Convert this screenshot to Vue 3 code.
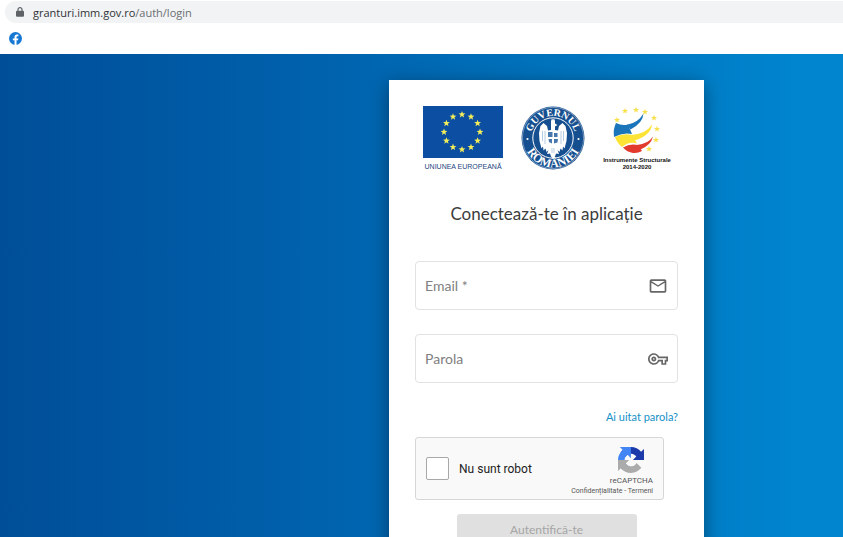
<template>
  <div class="ecran">
    <header class="browser">
      <div class="adresa">
        <svg class="lacat" viewBox="0 0 8 10" aria-hidden="true">
          <path d="M2 4V2.7a2 2 0 0 1 4 0V4" fill="none" stroke="#5f6368" stroke-width="1.2" />
          <rect x="0" y="3.8" width="8" height="6" rx="1" fill="#5f6368" />
        </svg>
        <span class="url">granturi.imm.gov.ro<span class="cale">/auth/login</span></span>
      </div>
      <nav class="marcaje">
        <a href="#" aria-label="Facebook">
          <svg class="facebook" viewBox="0 0 24 24">
            <circle cx="12" cy="12" r="12" fill="#1778d4" />
            <path
              d="M13.9 23.8v-8.4h2.8l.55-3.5H13.9V9.7c0-1 .5-1.9 2-1.9h1.5v-3s-1.4-.2-2.7-.2c-2.8 0-4.5 1.6-4.5 4.6v2.7H7.1v3.5h3.1v8.4z"
              fill="#fff"
            />
          </svg>
        </a>
      </nav>
    </header>

    <main class="pagina">
      <form class="card" @submit.prevent>
        <div class="sigle">
          <div class="sigla-ue">
            <svg viewBox="0 0 80 52" aria-hidden="true">
              <rect width="80" height="52" fill="#0b4ea2" />
              <polygon v-for="(p, i) in steleUE" :key="i" :points="p" fill="#f4ee5a" />
            </svg>
            <span>UNIUNEA EUROPEANĂ</span>
          </div>

          <svg class="sigla-guvern" viewBox="0 0 64 64" aria-hidden="true">
            <defs>
              <path id="arc-sus" d="M9.8 32a22.2 22.2 0 0 1 44.4 0" />
              <path id="arc-jos" d="M2.8 32a29.2 29.2 0 0 0 58.4 0" />
            </defs>
            <circle cx="32" cy="32" r="31.5" fill="#164f8f" />
            <circle cx="32" cy="32" r="30.6" fill="none" stroke="#fff" stroke-width="0.4" />
            <circle cx="32" cy="32" r="20.2" fill="#164f8f" stroke="#fff" stroke-width="1" />
            <text class="inel" text-anchor="middle">
              <textPath href="#arc-sus" startOffset="50%">GUVERNUL</textPath>
            </text>
            <text class="inel inel-jos" text-anchor="middle">
              <textPath href="#arc-jos" startOffset="50%">ROMÂNIEI</textPath>
            </text>
            <circle cx="6.5" cy="33" r="1.1" fill="#fff" />
            <circle cx="57.5" cy="33" r="1.1" fill="#fff" />
            <!-- acvila -->
            <path
              d="M30 15l1-2.500 1 1.500 1-1.500 1 2.500v2.500l2.500 1.500-2.500 1.500v3.500l3 .5 1-4.500 3.500-3 3 3 1.500 7-.5 8-2 7.500-1.500-2-.5 4-2-2-1 3.500-2-2 1.500 4-3-.5-1 3-2 2.500-2-2.500-1-3-3 .5 1.500-4-2 2-1-3.500-2 2-.5-4-1.500 2-2-7.500-.5-8 1.500-7 3-3 3.500 3 1 4.500 3-.5v-5z"
              fill="#fff"
            />
            <path
              d="M27 26h4.500v5H27zM33 27h3.500v4H33zM27.500 33h3.500v4.500l-3-1.500zM33 33h4l-.5 3.500-3.500 1z"
              fill="#4777ad"
            />
            <path
              d="M21.500 25v10M24 25v13M40 25v13M42.500 25v10M31 42v5M33 42v5"
              stroke="#86a8cf"
              stroke-width="0.6"
            />
          </svg>

          <div class="sigla-is">
            <svg viewBox="0 0 54 51" aria-hidden="true">
              <path d="M6 17Q12 20 18 18.500L22 28Q13 26 4 31Q3 23 6 17z" fill="#1b75bb" />
              <path d="M17 18.700Q28 17 33.500 7.500Q33 17 20.500 23.500z" fill="#1b75bb" />
              <path d="M5 31Q13 27 22 29L27 37.500Q19 35 12 41Q7 37 5 31z" fill="#fde335" />
              <path d="M21 29Q36 28 42 18.500Q41 29 25 34.500z" fill="#fde335" />
              <path d="M13 41.500Q20 37 28 39L32 45Q28 47.500 23 47Q17 46 13 41.500z" fill="#e23b2e" />
              <path d="M27 39Q38 38 43 30.500Q41 39 30.500 43.500z" fill="#e23b2e" />
              <polygon v-for="(p, i) in steleIS" :key="i" :points="p" fill="#f8e04a" />
            </svg>
            <span>Instrumente Structurale<br />2014-2020</span>
          </div>
        </div>

        <h1 class="titlu">Conectează-te în aplicație</h1>

        <div class="camp">
          <label for="email">Email *</label>
          <input id="email" v-model="email" type="email" autocomplete="username" />
          <svg class="icon" viewBox="0 0 24 24" aria-hidden="true">
            <path
              d="M22 6c0-1.100-.9-2-2-2H4c-1.100 0-2 .9-2 2v12c0 1.100.9 2 2 2h16c1.100 0 2-.9 2-2V6zm-2 0l-8 5-8-5h16zm0 12H4V8l8 5 8-5v10z"
            />
          </svg>
        </div>

        <div class="camp">
          <label for="parola">Parola</label>
          <input id="parola" v-model="parola" type="password" autocomplete="current-password" />
          <svg class="icon" viewBox="0 0 24 24" aria-hidden="true">
            <path
              d="M22 19h-6v-4h-2.680c-1.140 2.420-3.600 4-6.320 4-3.860 0-7-3.140-7-7s3.140-7 7-7c2.720 0 5.170 1.580 6.320 4H24v6h-2v4zm-4-2h2v-4h2v-2H11.940l-.23-.67C11.010 8.340 9.110 7 7 7c-2.760 0-5 2.240-5 5s2.240 5 5 5c2.110 0 4.010-1.340 4.710-3.330l.23-.67H18v4zM7 15c-1.650 0-3-1.350-3-3s1.350-3 3-3 3 1.350 3 3-1.350 3-3 3zm0-4c-.55 0-1 .45-1 1s.45 1 1 1 1-.45 1-1-.45-1-1-1z"
            />
          </svg>
        </div>

        <a class="uitat" href="#">Ai uitat parola?</a>

        <div class="captcha">
          <input id="robot" v-model="robot" type="checkbox" />
          <label for="robot">Nu sunt robot</label>
          <div class="recaptcha">
            <svg viewBox="0 0 64 64" aria-hidden="true">
              <path
                d="M64 31.955l-.033-1.370V4.687l-7.160 7.160C50.948 4.674 42.033.093 32.050.093c-10.400 0-19.622 4.960-25.458 12.640l11.736 11.860a15.550 15.550 0 0 1 4.754-5.334c2.050-1.600 4.952-2.906 8.968-2.906.485 0 .86.057 1.135.163 4.976.393 9.288 3.140 11.828 7.124l-8.307 8.307L64 31.953"
                fill="#1c3aa9"
              />
              <path
                d="M31.862.094l-1.370.033H4.594l7.160 7.160C4.580 13.147 0 22.060 0 32.046c0 10.400 4.960 19.622 12.640 25.458L24.500 45.768a15.550 15.550 0 0 1-5.334-4.754c-1.600-2.050-2.906-4.952-2.906-8.968 0-.485.057-.86.163-1.135.393-4.976 3.140-9.288 7.124-11.828l8.307 8.307L31.860.095"
                fill="#4285f4"
              />
              <path
                d="M.001 32.045l.033 1.370v25.898l7.160-7.160c5.860 7.173 14.774 11.754 24.760 11.754 10.400 0 19.622-4.960 25.458-12.640l-11.736-11.860a15.550 15.550 0 0 1-4.754 5.334c-2.050 1.600-4.952 2.906-8.968 2.906-.485 0-.86-.057-1.135-.163-4.976-.393-9.288-3.140-11.828-7.124l8.307-8.307c-10.522.04-22.400.066-27.295-.005"
                fill="#ababab"
              />
            </svg>
            <span class="marca">reCAPTCHA</span>
            <span class="legal"><a href="#">Confidențialitate</a> - <a href="#">Termeni</a></span>
          </div>
        </div>

        <button class="btn-login" type="submit" :disabled="!email || !parola || !robot">
          Autentifică-te
        </button>
      </form>
    </main>
  </div>
</template>

<script setup>
import { ref } from 'vue'

const email = ref('')
const parola = ref('')
const robot = ref(false)

const stea = (cx, cy, r) =>
  Array.from({ length: 10 }, (_, i) => {
    const raza = i % 2 ? r * 0.42 : r
    const u = (i * Math.PI) / 5 - Math.PI / 2
    return `${(cx + raza * Math.cos(u)).toFixed(2)},${(cy + raza * Math.sin(u)).toFixed(2)}`
  }).join(' ')

const steleUE = Array.from({ length: 12 }, (_, i) => {
  const u = (i * Math.PI) / 6
  return stea(39 + 18 * Math.cos(u), 26 + 17.5 * Math.sin(u), 3.6)
})

const steleIS = [
  [7, 14], [15, 5], [26, 4], [35, 6], [44, 12], [47, 23], [46, 34], [39, 43],
].map(([x, y]) => stea(x, y, 3.2))
</script>

<style>
body {
  margin: 0;
}
</style>

<style scoped>
.ecran {
  display: flex;
  flex-direction: column;
  height: 100vh;
  overflow: hidden;
  font-family: Lato, 'Open Sans', sans-serif;
}

.browser {
  flex: none;
  background: #fff;
}

.adresa {
  display: flex;
  align-items: center;
  gap: 9px;
  height: 22px;
  margin: 1px 0 0 5px;
  padding-left: 11px;
  border-radius: 11px 0 0 11px;
  background: #f1f3f4;
}

.lacat {
  width: 8px;
  height: 10px;
}

.url {
  font-family: 'Open Sans', sans-serif;
  font-size: 11px;
  color: #303236;
}

.cale {
  color: #6b6e72;
}

.marcaje {
  display: flex;
  align-items: center;
  height: 30px;
  padding: 0 9px 1px;
}

.marcaje a {
  display: flex;
}

.facebook {
  width: 13px;
  height: 13px;
}

.pagina {
  display: grid;
  grid-template-columns: 14fr minmax(0, 315px) 5fr;
  align-items: start;
  flex: 1;
  min-height: 0;
  padding-top: 26px;
  background: linear-gradient(to right, #004e98, #0063ae 40%, #0085ce 95%);
}

.card {
  grid-column: 2;
  display: flex;
  flex-direction: column;
  box-sizing: border-box;
  padding: 26px;
  background: #fff;
  box-shadow: 0 4px 18px rgba(0, 0, 0, 0.4);
}

.sigle {
  display: flex;
  justify-content: space-between;
  align-items: flex-start;
  height: 64px;
  padding: 0 7px 0 8px;
}

.sigla-ue,
.sigla-is {
  display: flex;
  flex-direction: column;
  align-items: center;
  white-space: nowrap;
  font-family: 'Liberation Sans', sans-serif;
}

.sigla-ue {
  width: 80px;
  gap: 5px;
  font-size: 7px;
  line-height: 8px;
  color: #1d4480;
}

.sigla-ue svg {
  width: 80px;
  height: 52px;
}

.sigla-guvern {
  width: 64px;
  height: 64px;
}

.inel {
  font-family: 'Liberation Serif', serif;
  font-size: 10px;
  font-weight: bold;
  fill: #fff;
}

.inel-jos {
  font-size: 12px;
}

.sigla-is {
  width: 68px;
  font-size: 6px;
  font-weight: bold;
  line-height: 7px;
  text-align: center;
  color: #111;
}

.sigla-is svg {
  width: 54px;
  height: 51px;
}

.titlu {
  margin: 32px 0 35px;
  font-size: 17px;
  font-weight: 400;
  line-height: 24px;
  text-align: center;
  color: #3c3c3c;
}

.camp {
  display: flex;
  align-items: center;
  box-sizing: border-box;
  height: 49px;
  margin-bottom: 24px;
  padding: 0 9px;
  border: 1px solid #e2e2e2;
  border-radius: 4px;
}

.camp label {
  font-size: 14px;
  color: #808080;
}

.camp input {
  flex: 1;
  min-width: 0;
  padding: 8px;
  border: none;
  outline: none;
  background: transparent;
  font-family: inherit;
  font-size: 14px;
  color: #333;
}

.icon {
  width: 20px;
  height: 20px;
  fill: #666;
}

.uitat {
  align-self: flex-end;
  margin-bottom: 10px;
  font-size: 11px;
  line-height: 20px;
  text-decoration: none;
  color: #1590c8;
}

.captcha {
  display: flex;
  align-items: center;
  box-sizing: border-box;
  width: 100%;
  max-width: 249px;
  height: 63px;
  padding: 0 10px;
  border: 1px solid #d6d6d6;
  border-radius: 3px;
  background: #f9f9f9;
  font-family: Roboto, sans-serif;
}

.captcha input {
  appearance: none;
  width: 23px;
  height: 23px;
  margin: 0 10px 0 0;
  border: 1px solid #a8a8a8;
  border-radius: 2px;
  background: #fff;
}

.captcha input:checked {
  background: #4285f4;
}

.captcha label {
  flex: 1;
  font-size: 12px;
  color: #222;
}

.recaptcha {
  display: flex;
  flex-direction: column;
  align-items: flex-end;
  padding-top: 4px;
  color: #555;
}

.recaptcha svg {
  width: 26px;
  height: 26px;
  margin: 2px 9px 2px 0;
}

.marca {
  font-size: 8px;
  line-height: 11px;
}

.legal {
  font-size: 7px;
  line-height: 10px;
}

.legal a {
  color: inherit;
  text-decoration: none;
}

.btn-login {
  align-self: center;
  width: 180px;
  height: 30px;
  margin-top: 14px;
  border: none;
  border-radius: 3px;
  background: #0085ce;
  font-family: inherit;
  font-size: 12px;
  color: #fff;
}

.btn-login:disabled {
  background: #e0e0e0;
  color: #a6a6a6;
}
</style>
